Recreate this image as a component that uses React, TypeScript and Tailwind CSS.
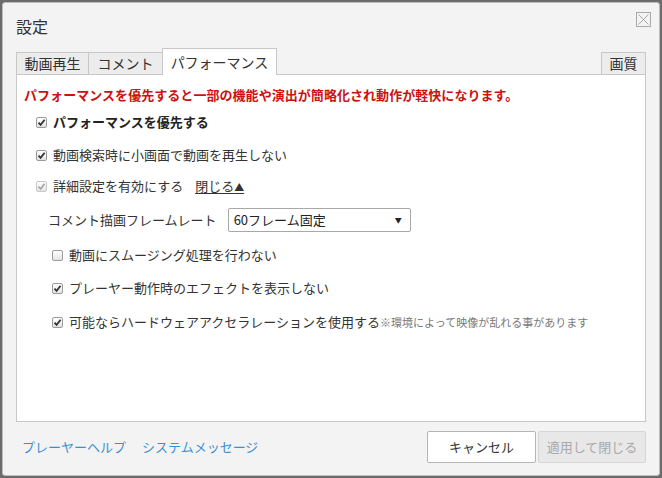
import React from "react";

const font = { fontFamily: '"Noto Sans CJK JP", "Noto Sans", sans-serif' };

function Check({ checked, disabled }: { checked: boolean; disabled?: boolean }) {
  return (
    <span
      className={`inline-flex items-center justify-center w-[11px] h-[11px] rounded-[2px] border shrink-0 bg-gradient-to-b from-white to-[#e4e4e4] ${
        disabled ? "border-[#c8c8c8]" : "border-[#9a9a9a]"
      }`}
    >
      {checked && (
        <svg width="9" height="9" viewBox="0 0 9 9">
          <path
            d="M1.5 4.6 L3.6 6.8 L7.6 1.8"
            fill="none"
            stroke={disabled ? "#a8a8a8" : "#333"}
            strokeWidth="1.8"
          />
        </svg>
      )}
    </span>
  );
}

function Row({
  label,
  checked,
  disabled,
  bold,
  className,
  children,
}: {
  label: string;
  checked: boolean;
  disabled?: boolean;
  bold?: boolean;
  className?: string;
  children?: React.ReactNode;
}) {
  return (
    <div className={`flex items-center h-[18px] ${className ?? ""}`}>
      <Check checked={checked} disabled={disabled} />
      <span
        className={`ml-[6px] text-[13px] leading-[18px] whitespace-nowrap ${
          bold ? "font-bold text-[#222]" : "text-[#333]"
        }`}
      >
        {label}
      </span>
      {children}
    </div>
  );
}

export default function App() {
  return (
    <div className="w-[662px] h-[478px] bg-[#6c6c6c] p-[2px]" style={font}>
      <div className="relative h-full bg-[#f3f3f3] rounded-[3px] border border-[#bdbdbd] flex flex-col px-[13px]">
        {/* close */}
        <svg className="absolute right-[8px] top-[9px]" width="15" height="15" viewBox="0 0 15 15">
          <rect x="0.5" y="0.5" width="14" height="14" fill="none" stroke="#a9a9a9" />
          <path d="M2.5 2.5 L12.5 12.5 M12.5 2.5 L2.5 12.5" stroke="#a9a9a9" strokeWidth="1" />
        </svg>

        <div className="pt-[13px] text-[16px] leading-[20px] text-[#333]">設定</div>

        {/* tabs */}
        <div className="mt-[12px] flex items-end h-[26px] relative z-10">
          <div className="w-[72px] h-[22px] bg-[#ececec] border border-b-0 border-r-0 border-[#c8c8c8] flex items-center justify-center text-[14px] text-[#333]">
            動画再生
          </div>
          <div className="w-[74px] h-[22px] bg-[#ececec] border border-b-0 border-r-0 border-[#c8c8c8] flex items-center justify-center text-[14px] text-[#333]">
            コメント
          </div>
          <div className="w-[115px] h-[27px] -mb-px bg-white border border-b-0 border-[#c8c8c8] flex items-center justify-center text-[14px] text-[#333]">
            パフォーマンス
          </div>
          <div className="ml-auto w-[45px] h-[22px] bg-[#ececec] border border-b-0 border-[#c8c8c8] flex items-center justify-center text-[14px] text-[#333]">
            画質
          </div>
        </div>

        {/* panel */}
        <div className="h-[348px] bg-white border border-[#c8c8c8] pt-[11px] pl-[7px]">
          <div className="text-[13px] leading-[18px] font-bold text-[#cc1111] whitespace-nowrap tracking-[0.05px]">
            パフォーマンスを優先すると一部の機能や演出が簡略化され動作が軽快になります。
          </div>

          <div className="pl-[12px]">
            <Row className="mt-[9px]" label="パフォーマンスを優先する" checked bold />
            <Row className="mt-[15px]" label="動画検索時に小画面で動画を再生しない" checked />
            <Row className="mt-[13px]" label="詳細設定を有効にする" checked disabled>
              <span className="ml-[12px] text-[13px] leading-[18px] text-[#333] underline underline-offset-2">
                閉じる<span className="text-[10px]">▲</span>
              </span>
            </Row>
          </div>

          <div className="pl-[24px] mt-[13px] flex items-center">
            <span className="text-[13px] text-[#333] whitespace-nowrap">コメント描画フレームレート</span>
            <div className="ml-[11px] w-[183px] h-[24px] border border-[#a8a8a8] rounded-[2px] bg-white flex items-center px-[5px]">
              <span className="text-[13px] text-[#222]">60フレーム固定</span>
              <span className="ml-auto text-[7px] text-[#222] pr-[3px]">▼</span>
            </div>
          </div>

          <div className="pl-[28px]">
            <Row className="mt-[14px]" label="動画にスムージング処理を行わない" checked={false} />
            <Row className="mt-[15px]" label="プレーヤー動作時のエフェクトを表示しない" checked />
            <Row className="mt-[16px]" label="可能ならハードウェアアクセラレーションを使用する" checked>
              <span className="text-[11px] leading-[18px] text-[#777] whitespace-nowrap">
                ※環境によって映像が乱れる事があります
              </span>
            </Row>
          </div>
        </div>

        {/* footer */}
        <div className="flex items-start mt-[9px]">
          <div className="flex items-center h-[32px] pl-[6px] gap-[16px] text-[13px] text-[#3a8fd4]">
            <span>プレーヤーヘルプ</span>
            <span>システムメッセージ</span>
          </div>
          <div className="ml-auto flex gap-[2px]">
            <div className="w-[109px] h-[32px] bg-white border border-[#b5b5b5] rounded-[2px] flex items-center justify-center text-[13px] text-[#333]">
              キャンセル
            </div>
            <div className="w-[108px] h-[32px] bg-[#e8e8e8] border border-[#d6d6d6] rounded-[2px] flex items-center justify-center text-[13px] text-[#a9a9a9]">
              適用して閉じる
            </div>
          </div>
        </div>
      </div>
    </div>
  );
}
